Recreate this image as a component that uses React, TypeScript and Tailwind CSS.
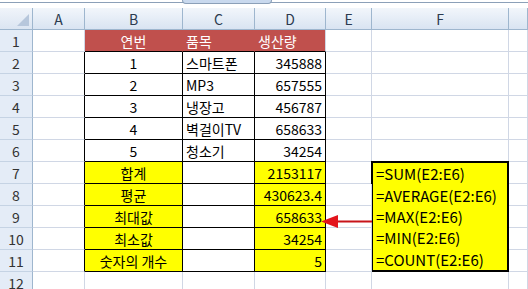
import React from "react";

const cols = ["A", "B", "C", "D", "E", "F", ""];

const items: [string, string, string][] = [
  ["1", "스마트폰", "345888"],
  ["2", "MP3", "657555"],
  ["3", "냉장고", "456787"],
  ["4", "벽걸이TV", "658633"],
  ["5", "청소기", "34254"],
];

const summary: [string, string][] = [
  ["합계", "2153117"],
  ["평균", "430623.4"],
  ["최대값", "658633"],
  ["최소값", "34254"],
  ["숫자의 개수", "5"],
];

const formulas = [
  "=SUM(E2:E6)",
  "=AVERAGE(E2:E6)",
  "=MAX(E2:E6)",
  "=MIN(E2:E6)",
  "=COUNT(E2:E6)",
];

const grid = "border-r border-b border-[#d0d7e5]";

function RowHead({ n }: { n: number }) {
  return (
    <div className="flex items-center justify-center bg-[#e4ecf7] border-r border-b border-r-[#9eb6ce] border-b-[#c5d3e4] text-[#333]">
      {n}
    </div>
  );
}

export default function App() {
  const rows = [];
  for (let r = 1; r <= 12; r++) {
    const inTable = r >= 2 && r <= 11;
    const cells: React.ReactNode[] = [];
    cells.push(<RowHead key="h" n={r} />);
    cells.push(
      <div
        key="a"
        className={`${grid} ${inTable ? "border-r-black" : ""}`}
      />
    );

    if (r === 1) {
      cells.push(
        <div key="b" className="flex items-center justify-center bg-[#c0504d] text-white border-r border-b border-r-[#c0504d] border-b-black">
          연번
        </div>
      );
      cells.push(
        <div key="c" className="flex items-center px-[3px] bg-[#c0504d] text-white border-r border-b border-r-[#c0504d] border-b-black">
          품목
        </div>
      );
      cells.push(
        <div key="d" className="flex items-center px-[3px] bg-[#c0504d] text-white border-r border-b border-r-[#d0d7e5] border-b-black">
          생산량
        </div>
      );
    } else if (r <= 6) {
      const [no, name, qty] = items[r - 2];
      cells.push(
        <div key="b" className="flex items-center justify-center border-r border-b border-black">{no}</div>
      );
      cells.push(
        <div key="c" className="flex items-center px-[3px] border-r border-b border-black">{name}</div>
      );
      cells.push(
        <div key="d" className="flex items-center justify-end px-[3px] border-r border-b border-black">{qty}</div>
      );
    } else if (r <= 11) {
      const [label, val] = summary[r - 7];
      cells.push(
        <div key="b" className="flex items-center justify-center bg-[#ffff00] border-r border-b border-black">{label}</div>
      );
      cells.push(<div key="c" className="border-r border-b border-black" />);
      cells.push(
        <div key="d" className="flex items-center justify-end px-[3px] bg-[#ffff00] border-r border-b border-black">{val}</div>
      );
    } else {
      cells.push(<div key="b" className={grid} />);
      cells.push(<div key="c" className={grid} />);
      cells.push(<div key="d" className={grid} />);
    }

    cells.push(<div key="e" className={grid} />);

    if (r === 7) {
      cells.push(
        <div
          key="f"
          className="row-span-5 -ml-px -mt-px flex flex-col bg-[#ffff00] border-2 border-black pl-[3px] text-[15px]"
        >
          {formulas.map((f) => (
            <div key={f} className="h-[22px] flex items-center">{f}</div>
          ))}
        </div>
      );
    } else if (r < 7 || r > 11) {
      cells.push(<div key="f" className={grid} />);
    }

    cells.push(<div key="g" className={grid} />);
    rows.push(...cells);
  }

  return (
    <div
      className="relative w-[528px] h-[289px] overflow-hidden bg-white text-[14px] leading-none text-black"
      style={{ fontFamily: '"Noto Sans CJK KR", "Noto Sans", sans-serif' }}
    >
      {/* formula bar edge */}
      <div className="relative h-2 bg-white">
        <div className="absolute top-[2px] left-0 right-0 h-px bg-[#8ca0b8]" />
        <div className="absolute top-0 left-[182px] w-[90px] h-[4px] rounded-b-[6px] bg-[#c9d9ee] border border-t-0 border-[#8ca0b8]" />
      </div>

      <div className="grid grid-cols-[33px_52px_98px_72px_71px_46px_137px_1fr] auto-rows-[22px]">
        <div className="relative bg-gradient-to-b from-[#f0f4fa] to-[#dbe5f2] border-r border-b border-[#9eb6ce]">
          <div className="absolute right-[3px] bottom-[3px] w-0 h-0 border-l-[12px] border-l-transparent border-b-[12px] border-b-[#b7c7dc]" />
        </div>
        {cols.map((c, i) => (
          <div
            key={i}
            className="flex items-center justify-center bg-gradient-to-b from-[#f2f6fb] to-[#d9e4f2] border-r border-b border-[#9eb6ce] text-[#2b3a4f]"
          >
            {c}
          </div>
        ))}
        {rows}
      </div>

      <svg className="absolute left-[320px] top-[213px]" width="56" height="18" viewBox="0 0 56 18">
        <line x1="14" y1="8.5" x2="52" y2="8.5" stroke="#c8141a" strokeWidth="2" />
        <polygon points="1,8.5 18,2 18,15" fill="#e3141c" />
      </svg>
    </div>
  );
}
